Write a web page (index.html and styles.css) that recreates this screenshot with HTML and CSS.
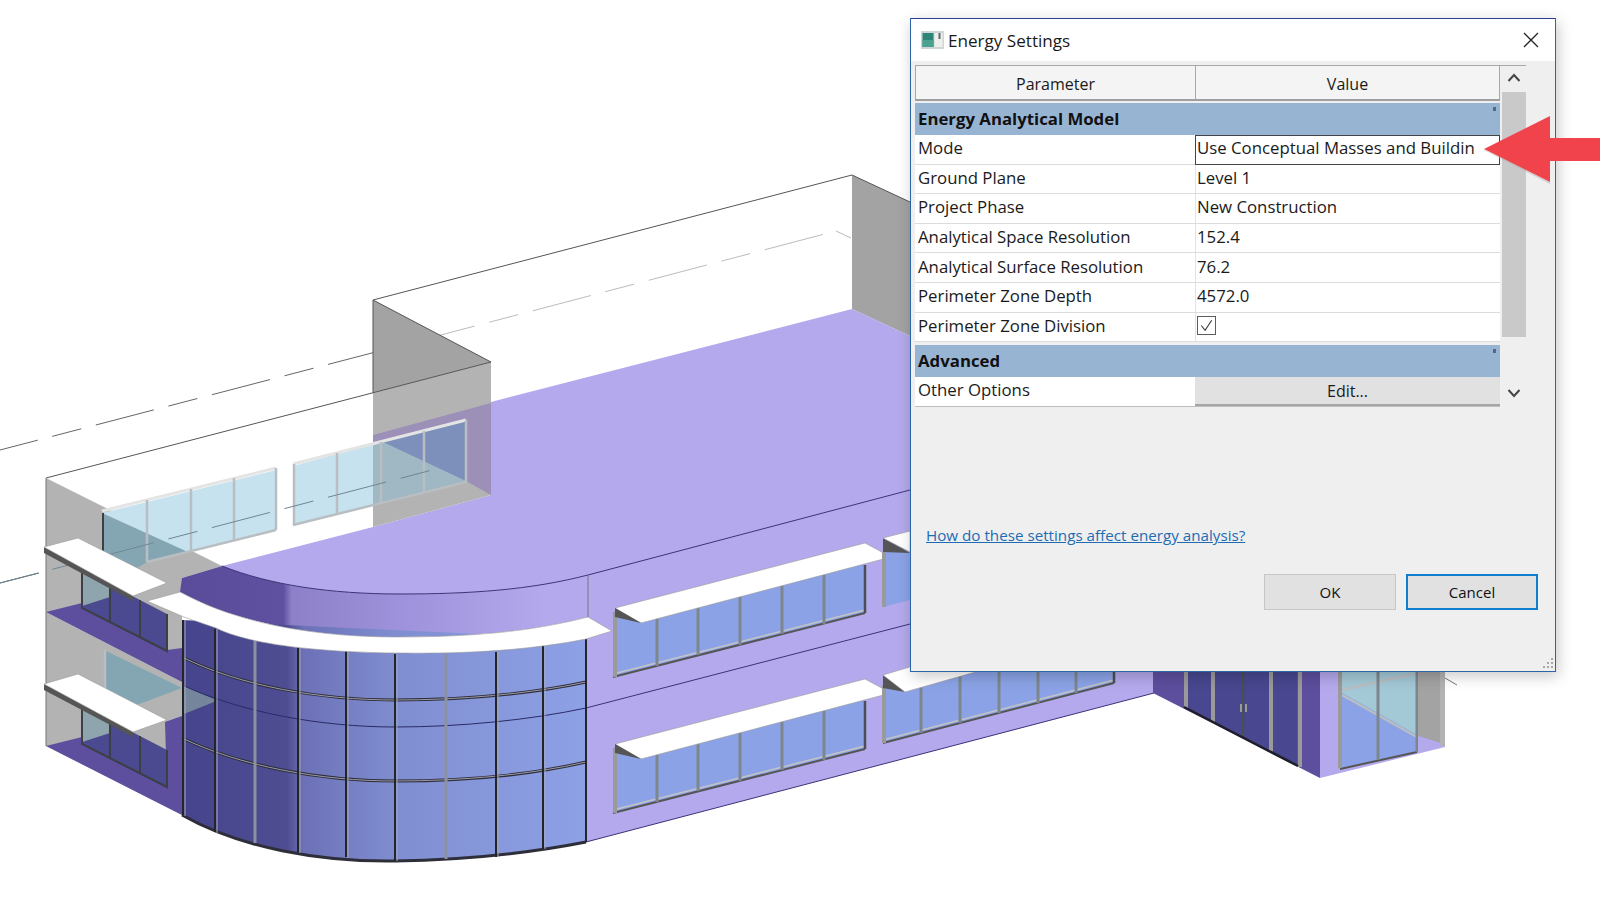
FILE: index.html
```html
<!DOCTYPE html>
<html lang="en">
<head>
  <meta charset="UTF-8">
  <title>Energy Settings</title>
  <link rel="stylesheet" href="styles.css">
</head>
<body>

<div class="stage">

  <!-- building model -->
  <svg class="model" viewBox="0 0 1600 910" width="1600" height="910">
    <defs>
      <linearGradient id="fascia" gradientUnits="userSpaceOnUse" x1="182" y1="0" x2="588" y2="0">
        <stop offset="0" stop-color="#5a4c9a"/>
        <stop offset="0.25" stop-color="#5f51a0"/>
        <stop offset="0.27" stop-color="#8d80c8"/>
        <stop offset="0.55" stop-color="#9e93dc"/>
        <stop offset="0.9" stop-color="#b4a9ec"/>
      </linearGradient>
      <linearGradient id="curtain" gradientUnits="userSpaceOnUse" x1="182" y1="0" x2="586" y2="0">
        <stop offset="0" stop-color="#45448c"/>
        <stop offset="0.26" stop-color="#4f4d92"/>
        <stop offset="0.3" stop-color="#6d71b7"/>
        <stop offset="0.53" stop-color="#7f8ed0"/>
        <stop offset="1" stop-color="#8ea1e6"/>
      </linearGradient>

      <g id="strip">
        <polygon class="glass" points="613,612 865,545 865,613 613,677"/>
        <polyline class="sill" points="613,677 865,613"/>
        <polyline class="sill-lite" points="613,674 865,610"/>
        <line class="post" x1="615" y1="612" x2="615" y2="677"/>
        <line class="mullion" x1="657" y1="610" x2="657" y2="666"/>
        <line class="mullion" x1="698" y1="600" x2="698" y2="655"/>
        <line class="mullion" x1="740" y1="590" x2="740" y2="645"/>
        <line class="mullion" x1="782" y1="580" x2="782" y2="634"/>
        <line class="mullion" x1="824" y1="570" x2="824" y2="624"/>
        <line class="post-dark" x1="865" y1="565" x2="865" y2="613"/>
        <polygon class="slab" points="615,608 865,543 891,557 641,623"/>
        <polygon class="under" points="615,608 641,623 615,617"/>
      </g>
    </defs>

    <!-- back walls and roof lines -->
    <polygon class="wall-dark" points="852,175 910,202 910,336 852,309"/>
    <polyline class="edge" points="373,300 852,175 910,202"/>
    <line class="dash" x1="0" y1="450" x2="437" y2="336"/>
    <line class="dash-lite" x1="437" y1="336" x2="836" y2="231"/>
    <line class="dash-lite" x1="836" y1="231" x2="851" y2="238"/>

    <!-- roof slab floor -->
    <path class="floor" d="M852,309 L910,336 L910,490 L588,575 C530,590 470,594 400,594 C330,594 270,585 222,566 L373,527 L491,495 L491,402 Z"/>

    <!-- mid wall -->
    <polygon class="wall-dark" points="373,300 491,362 373,393"/>
    <polygon class="wall" points="373,393 491,362 491,495 373,527"/>
    <polygon class="wall-purple" points="373,435 491,403 491,495 466,481 381,503 373,480"/>
    <polyline class="edge" points="373,393 373,300 491,362"/>
    <line class="edge" x1="46" y1="478" x2="491" y2="362"/>

    <!-- left wing walls -->
    <polygon class="wall" points="46,478 222,566 182,578 182,682 46,612"/>
    <polygon class="wall" points="46,612 182,682 182,815 46,746"/>
    <polygon class="band" points="46,612 82,603 167,650 182,648 182,682"/>
    <polygon class="band" points="46,746 82,737 167,787 182,786 182,815"/>
    <polygon class="band" points="165,722 182,716 182,790 167,790"/>
    <line class="edge-thin" x1="46" y1="478" x2="46" y2="746"/>
    <line class="edge" x1="0" y1="583" x2="39" y2="573"/>

    <!-- upper windows -->
    <polygon class="pane" points="102,513 276,470 276,530 147,562"/>
    <polygon class="pane-teal" points="102,513 188,552 147,562 102,590"/>
    <polygon class="pane" points="293,466 373,444 373,504 293,525"/>
    <polygon class="pane-grey" points="373,444 466,421 466,481 373,504"/>
    <polygon class="pane-blue" points="383,442 466,421 466,481"/>
    <polyline class="frame-top" points="102,511 276,468"/>
    <polyline class="frame-top" points="293,464 466,420"/>
    <polyline class="frame" points="147,562 276,530"/>
    <polyline class="frame" points="293,525 466,482"/>
    <line class="frame" x1="147" y1="500" x2="147" y2="562"/>
    <line class="frame" x1="191" y1="489" x2="191" y2="551"/>
    <line class="frame" x1="234" y1="478" x2="234" y2="540"/>
    <line class="frame" x1="276" y1="468" x2="276" y2="530"/>
    <line class="frame" x1="294" y1="464" x2="294" y2="525"/>
    <line class="frame" x1="337" y1="453" x2="337" y2="514"/>
    <line class="frame" x1="381" y1="442" x2="381" y2="503"/>
    <line class="frame" x1="424" y1="431" x2="424" y2="492"/>
    <line class="frame" x1="466" y1="420" x2="466" y2="482"/>
    <line class="frame-dark" x1="103" y1="513" x2="103" y2="560"/>
    <line class="dash-glass" x1="0" y1="583" x2="436" y2="469"/>

    <!-- main wall -->
    <polygon class="floor" points="586,575 910,490 1154,400 1154,693 586,842"/>
    <line class="floor-edge" x1="586" y1="708" x2="910" y2="624"/>
    <line class="floor-edge" x1="586" y1="842" x2="1154" y2="693"/>

    <!-- fascia and curved slab -->
    <path class="fascia" d="M182,578 L222,566 C270,585 330,594 400,594 C470,594 530,590 588,575 L588,617 C530,632 470,637 396,637 C320,637 240,625 180,592 Z"/>
    <path class="floor-edge" d="M222,566 C270,585 330,594 400,594 C470,594 530,590 588,575 L910,490"/>
    <line class="edge-thin" x1="588" y1="575" x2="588" y2="617"/>

    <!-- curtain wall -->
    <path class="curtain" d="M182,620 L586,639 L586,842 C530,853 460,860 395,861 C320,862 240,848 182,815 Z"/>
    <path class="curtain" d="M182,620 C240,640 320,654 395,654 C470,654 530,650 586,639 L586,700 L182,700 Z"/>
    <polygon class="pane-through" points="184,686 214,699 214,702 184,714"/>
    <path class="transom" d="M182,657 C240,686 320,700 395,700 C460,700 530,694 586,682"/>
    <path class="transom-core" d="M182,657 C240,686 320,700 395,700 C460,700 530,694 586,682"/>
    <path class="transom-thin" d="M182,685 C240,712 320,727 395,727 C460,727 530,720 586,708"/>
    <path class="transom" d="M182,738 C240,766 320,781 395,781 C460,781 530,775 586,762"/>
    <path class="transom-core" d="M182,738 C240,766 320,781 395,781 C460,781 530,775 586,762"/>
    <path class="transom" d="M182,815 C240,848 320,862 395,861 C460,860 530,853 586,842"/>
    <line class="curtain-post" x1="183" y1="620" x2="183" y2="815"/>
    <line class="curtain-edge" x1="185" y1="620" x2="185" y2="816"/>
    <line class="curtain-post" x1="215" y1="629" x2="215" y2="832"/>
    <line class="curtain-edge" x1="217" y1="629" x2="217" y2="833"/>
    <line class="curtain-lite" x1="255" y1="639" x2="255" y2="843"/>
    <line class="curtain-post" x1="298" y1="647" x2="298" y2="852"/>
    <line class="curtain-edge" x1="300" y1="647" x2="300" y2="853"/>
    <line class="curtain-post" x1="346" y1="651" x2="346" y2="857"/>
    <line class="curtain-edge" x1="348" y1="651" x2="348" y2="858"/>
    <line class="curtain-post" x1="395" y1="654" x2="395" y2="861"/>
    <line class="curtain-edge" x1="397" y1="654" x2="397" y2="861"/>
    <line class="curtain-lite" x1="446" y1="654" x2="446" y2="859"/>
    <line class="curtain-post" x1="496" y1="652" x2="496" y2="857"/>
    <line class="curtain-edge" x1="498" y1="652" x2="498" y2="857"/>
    <line class="curtain-post" x1="543" y1="645" x2="543" y2="849"/>
    <line class="curtain-edge" x1="545" y1="645" x2="545" y2="849"/>
    <line class="curtain-post" x1="586" y1="639" x2="586" y2="842"/>
    <path class="slab" d="M147,601 L180,592 C240,625 320,637 396,637 C470,637 530,632 588,617 L612,631 L586,639 C530,650 470,654 396,653 C320,652 250,645 216,628 L184,617 Z"/>

    <!-- wing windows and awnings -->
    <polygon class="pane-low" points="82,570 167,614 167,651 82,608"/>
    <polygon class="pane-shade" points="82,570 110,584 110,597 82,606"/>
    <polygon class="pane-low" points="82,706 167,750 167,787 82,744"/>
    <polygon class="pane-shade" points="82,706 110,720 110,733 82,742"/>
    <polygon class="pane-teal" points="104,650 182,688 145,702 104,715"/>
    <line class="frame" x1="105" y1="650" x2="105" y2="715"/>
    <polyline class="frame-dark" points="82,570 82,608 167,651 167,614"/>
    <polyline class="frame-dark" points="82,706 82,744 167,787 167,750"/>
    <line class="frame-dark" x1="110" y1="584" x2="110" y2="622"/>
    <line class="frame-dark" x1="140" y1="600" x2="140" y2="637"/>
    <line class="frame-dark" x1="110" y1="720" x2="110" y2="758"/>
    <line class="frame-dark" x1="140" y1="736" x2="140" y2="773"/>
    <polygon class="under" points="44,547 133,596 133,601 44,553"/>
    <polygon class="slab" points="44,547 78,538 167,583 133,596"/>
    <polygon class="under" points="44,684 133,732 133,737 44,690"/>
    <polygon class="slab" points="44,684 78,674 167,720 133,732"/>

    <!-- window strips on main wall -->
    <use href="#strip"/>
    <use href="#strip" y="136"/>
    <polygon class="glass" points="883,552 910,545 910,600 883,607"/>
    <polygon class="under" points="883,538 910,553 883,552"/>
    <polygon class="slab" points="883,538 910,531 910,552"/>
    <line class="post" x1="884" y1="552" x2="884" y2="607"/>
    <polygon class="glass" points="883,680 1114,620 1114,683 883,743"/>
    <polyline class="sill" points="883,743 1114,683"/>
    <polyline class="sill-lite" points="883,740 1114,680"/>
    <line class="post" x1="884" y1="685" x2="884" y2="743"/>
    <line class="mullion" x1="921" y1="670" x2="921" y2="733"/>
    <line class="mullion" x1="960" y1="660" x2="960" y2="723"/>
    <line class="mullion" x1="999" y1="650" x2="999" y2="713"/>
    <line class="mullion" x1="1038" y1="640" x2="1038" y2="703"/>
    <line class="mullion" x1="1076" y1="630" x2="1076" y2="693"/>
    <line class="post-dark" x1="1114" y1="620" x2="1114" y2="683"/>
    <polygon class="under" points="883,675 905,692 883,688"/>
    <polygon class="slab" points="883,675 1000,640 1000,665 905,692"/>

    <!-- right wing -->
    <polygon class="band" points="1153,660 1320,660 1320,778 1153,693"/>
    <polygon class="pane-door" points="1186,660 1297,660 1297,765 1186,708"/>
    <line class="post" x1="1186" y1="660" x2="1186" y2="708"/>
    <line class="post" x1="1213" y1="660" x2="1213" y2="722"/>
    <line class="post-dark" x1="1243" y1="660" x2="1243" y2="737"/>
    <line class="post" x1="1271" y1="660" x2="1271" y2="752"/>
    <line class="post" x1="1300" y1="660" x2="1300" y2="767"/>
    <polyline class="door-sill" points="1184,707 1298,766"/>
    <rect class="handle" x="1240" y="704" width="2" height="8"/>
    <rect class="handle" x="1245" y="704" width="2" height="8"/>
    <polygon class="floor" points="1320,660 1445,660 1445,747 1320,778"/>
    <polygon class="glass" points="1340,660 1417,660 1417,752 1340,768"/>
    <polygon class="pane-side" points="1342,693 1342,660 1417,660 1417,735"/>
    <polyline class="frame" points="1342,690 1417,673"/>
    <polyline class="frame" points="1342,695 1417,737"/>
    <polyline class="sill" points="1340,769 1417,752"/>
    <line class="post" x1="1340" y1="660" x2="1340" y2="768"/>
    <line class="mullion" x1="1378" y1="660" x2="1378" y2="760"/>
    <line class="mullion" x1="1417" y1="660" x2="1417" y2="752"/>
    <polygon class="wall-dark" points="1418,660 1440,660 1440,743 1418,736"/>
    <polygon class="wall" points="1440,660 1445,660 1445,747 1440,745"/>
    <polygon class="floor" points="1418,736 1440,743 1418,752"/>
    <line class="edge-thin" x1="1445" y1="678" x2="1457" y2="685"/>
  </svg>

  <!-- dialog -->
  <div class="dialog">
    <div class="title-bar">
      <svg class="app-icon" viewBox="0 0 23 18" width="23" height="18">
        <rect width="23" height="18" fill="#cfd6d6"/>
        <rect x="1.5" y="2" width="11" height="14" fill="#2c8576"/>
        <rect x="1.5" y="9" width="11" height="7" fill="#4ba38f"/>
        <rect x="13.5" y="2" width="8" height="14" fill="#eef0ee"/>
        <rect x="17.5" y="2" width="2" height="6" fill="#5c6a6a"/>
      </svg>
      <span class="title">Energy Settings</span>
      <svg class="close" viewBox="0 0 16 16" width="16" height="16">
        <path d="M1 1 L15 15 M15 1 L1 15" fill="none" stroke="#222" stroke-width="1.3"/>
      </svg>
    </div>

    <div class="dialog-body">
      <div class="grid-wrap">
        <div class="grid">
          <div class="head">
            <div class="head-cell col-name">Parameter</div>
            <div class="head-cell col-value">Value</div>
          </div>

          <div class="section">Energy Analytical Model<i class="dot"></i></div>
          <div class="row">
            <div class="cell col-name">Mode</div>
            <div class="cell col-value current">Use Conceptual Masses and Buildin</div>
          </div>
          <div class="row">
            <div class="cell col-name">Ground Plane</div>
            <div class="cell col-value">Level 1</div>
          </div>
          <div class="row">
            <div class="cell col-name">Project Phase</div>
            <div class="cell col-value">New Construction</div>
          </div>
          <div class="row">
            <div class="cell col-name">Analytical Space Resolution</div>
            <div class="cell col-value">152.4</div>
          </div>
          <div class="row">
            <div class="cell col-name">Analytical Surface Resolution</div>
            <div class="cell col-value">76.2</div>
          </div>
          <div class="row">
            <div class="cell col-name">Perimeter Zone Depth</div>
            <div class="cell col-value">4572.0</div>
          </div>
          <div class="row">
            <div class="cell col-name">Perimeter Zone Division</div>
            <div class="cell col-value">
              <svg class="check" viewBox="0 0 20 20" width="19" height="19">
                <rect x="0.5" y="0.5" width="19" height="19" fill="#fff" stroke="#555"/>
                <path d="M4.5 10 L8.5 15 L15.5 4.5" fill="none" stroke="#333" stroke-width="1.1"/>
              </svg>
            </div>
          </div>

          <div class="section section-gap">Advanced<i class="dot"></i></div>
          <div class="row row-last">
            <div class="cell col-name">Other Options</div>
            <div class="edit col-value">Edit...</div>
          </div>
        </div>

        <div class="scrollbar">
          <svg class="arrow-btn" viewBox="0 0 24 26" width="24" height="26">
            <path d="M6.5 15 L12 9 L17.5 15" fill="none" stroke="#444" stroke-width="2"/>
          </svg>
          <div class="thumb"></div>
          <svg class="arrow-btn arrow-down" viewBox="0 0 24 26" width="24" height="26">
            <path d="M6.5 10 L12 16 L17.5 10" fill="none" stroke="#444" stroke-width="2"/>
          </svg>
        </div>
      </div>

      <a class="help" href="#">How do these settings affect energy analysis?</a>

      <div class="buttons">
        <button class="btn">OK</button>
        <button class="btn btn-default">Cancel</button>
      </div>
    </div>

    <svg class="grip" viewBox="0 0 12 12" width="12" height="12">
      <path d="M9 1h2v2H9z M5 5h2v2H5z M9 5h2v2H9z M1 9h2v2H1z M5 9h2v2H5z M9 9h2v2H9z" fill="#a9a9a9"/>
    </svg>
  </div>

  <!-- red callout arrow -->
  <svg class="callout" viewBox="0 0 116 70" width="116" height="70">
    <polygon points="0,34 66,1 66,23 116,23 116,46 66,46 66,67" fill="#f1434b"/>
    <polygon points="66,67 66,69 0,35 0,34" fill="#b9aab0" opacity="0.5"/>
  </svg>

</div>

</body>
</html>
```

FILE: styles.css
```css
html, body {
  margin: 0;
  padding: 0;
  background: #fff;
}

body {
  font-family: "Open Sans", "Noto Sans", sans-serif;
  color: #1a1a1a;
  overflow: hidden;
}

.stage {
  position: relative;
  width: 1600px;
  height: 910px;
  overflow: hidden;
}

/* model */
.model {
  display: block;
}

.wall { fill: #b3b3b3; }
.wall-dark { fill: #a3a3a3; }
.wall-purple { fill: #9c90b8; }
.floor { fill: #b4a9ec; }
.band { fill: #5d4e9e; }
.fascia { fill: url(#fascia); }
.curtain { fill: url(#curtain); }
.glass { fill: #8ba3e6; }
.slab { fill: #fff; stroke: #9a9a9a; stroke-width: 0.6; }
.under { fill: #555; }
.pane { fill: #c6e2ef; }
.pane-grey { fill: #9fb8c4; }
.pane-blue { fill: #7d90bc; }
.pane-teal { fill: #84a6b3; }
.pane-low { fill: #4b4a90; }
.pane-shade { fill: #8fa5ae; }
.pane-door { fill: #48478f; }
.pane-side { fill: #a3c8d6; }
.pane-through { fill: #75859c; }

.edge, .edge-thin, .dash, .dash-lite, .dash-glass, .floor-edge,
.sill, .sill-lite, .post, .post-dark, .mullion, .frame, .frame-top, .frame-dark,
.transom, .transom-core, .transom-thin, .curtain-post, .curtain-edge, .curtain-lite, .door-sill {
  fill: none;
}

.edge { stroke: #555; stroke-width: 1; }
.edge-thin { stroke: #777; stroke-width: 1; }
.dash { stroke: #666; stroke-width: 1; stroke-dasharray: 60 15 30 15; stroke-dashoffset: 21; }
.dash-lite { stroke: #bcbcbc; stroke-width: 1; stroke-dasharray: 60 15 30 15; stroke-dashoffset: 21; }
.dash-glass { stroke: #6f8794; stroke-width: 1; stroke-dasharray: 60 15 30 15; stroke-dashoffset: 21; }
.floor-edge { stroke: #3a3378; stroke-width: 1; }
.sill { stroke: #555; stroke-width: 2; }
.sill-lite { stroke: #c4c4c4; stroke-width: 1.5; }
.post { stroke: #9a9a9a; stroke-width: 4; }
.post-dark { stroke: #4a4f55; stroke-width: 2.5; }
.mullion { stroke: #7d868e; stroke-width: 3; }
.frame { stroke: #b9bec2; stroke-width: 2.5; }
.frame-top { stroke: #e4e4e4; stroke-width: 3; }
.frame-dark { stroke: #3c3f46; stroke-width: 2; }
.transom { stroke: #2e2e3a; stroke-width: 3; }
.transom-core { stroke: #9a9aa8; stroke-width: 1; }
.transom-thin { stroke: #2b2a66; stroke-width: 1; }
.curtain-post { stroke: #24242c; stroke-width: 2; }
.curtain-edge { stroke: #a5a9b8; stroke-width: 1; }
.curtain-lite { stroke: #8c90a0; stroke-width: 3; }
.door-sill { stroke: #1f1f2a; stroke-width: 2.5; }
.handle { fill: #9a9a9a; }

/* dialog */
.dialog {
  position: absolute;
  left: 910px;
  top: 18px;
  width: 646px;
  height: 654px;
  box-sizing: border-box;
  background: #efefef;
  border: 1px solid #2f63a8;
  border-top-color: #27408f;
  box-shadow: 2px 4px 14px rgba(0,0,0,0.22);
  display: flex;
  flex-direction: column;
}

.title-bar {
  height: 42px;
  flex: none;
  background: #fff;
  display: flex;
  align-items: center;
  padding: 0 16px 0 10px;
}

.app-icon {
  margin-right: 4px;
}

.title {
  font-size: 17.1px;
  flex: 1;
  padding-top: 1px;
}

.dialog-body {
  flex: 1;
  display: flex;
  flex-direction: column;
  padding: 4px 0 0 4px;
}

.grid-wrap {
  display: flex;
  gap: 2px;
  border-top: 1px solid #a8a8a8;
  width: 611px;
}

.grid {
  width: 585px;
  flex: none;
}

.head {
  display: flex;
  height: 33px;
  background: #f4f4f4;
  border-bottom: 2px solid #9e9e9e;
  margin-bottom: 2px;
}

.head-cell {
  display: flex;
  align-items: center;
  justify-content: center;
  font-size: 16px;
  padding-top: 2px;
  border-left: 1px solid #a8a8a8;
}

.col-name {
  width: 280px;
  flex: none;
  box-sizing: border-box;
}

.col-value {
  flex: 1;
  min-width: 0;
  box-sizing: border-box;
}

.head .col-value {
  border-right: 1px solid #a8a8a8;
}

.section {
  position: relative;
  height: 32px;
  line-height: 32px;
  background: #98b4d3;
  font-size: 16.8px;
  font-weight: 700;
  padding-left: 3px;
  color: #111;
}

.section-gap {
  margin-top: 3px;
}

.dot {
  position: absolute;
  right: 4px;
  top: 4px;
  width: 3px;
  height: 4px;
  background: #4f6a88;
}

.row {
  display: flex;
  height: 29.6px;
  background: #fff;
  border-bottom: 1px solid #dcdcdc;
  box-sizing: border-box;
}

.row-last {
  height: 30px;
  border-bottom: 1px solid #bdbdbd;
}

.cell {
  display: flex;
  align-items: center;
  font-size: 16.8px;
  padding: 0 0 3px 3px;
  white-space: nowrap;
  overflow: hidden;
}

.row-last .cell {
  padding-bottom: 4px;
}

.cell.col-value {
  padding-left: 1px;
  border-left: 1px solid #e2e2e2;
}

.cell.current {
  border: 1px solid #444;
  height: 30px;
  padding-bottom: 5px;
}

.check {
  margin-top: 0;
  margin-left: 0;
}

.edit {
  display: flex;
  align-items: center;
  justify-content: center;
  background: #e1e1e1;
  border-bottom: 2px solid #a5a5a5;
  font-size: 16px;
  padding-top: 1px;
}

.scrollbar {
  position: relative;
  width: 24px;
  flex: none;
}

.arrow-btn {
  display: block;
}

.arrow-down {
  position: absolute;
  left: 0;
  top: 314px;
}

.thumb {
  height: 245px;
  background: #c9c9c9;
}

.help {
  margin: 117px 0 0 11px;
  font-size: 15.2px;
  line-height: 22px;
  color: #1d6cb3;
  align-self: flex-start;
}

.buttons {
  display: flex;
  justify-content: flex-end;
  gap: 10px;
  margin-top: 28px;
  padding-right: 17px;
}

.btn {
  width: 132px;
  height: 36px;
  background: #e1e1e1;
  border: 1px solid #c6c6c6;
  font-family: inherit;
  font-size: 15px;
  color: #111;
  padding: 0;
}

.btn-default {
  border: 2px solid #0f7ecf;
}

.grip {
  position: absolute;
  right: 1px;
  bottom: 2px;
}

.callout {
  position: absolute;
  left: 1484px;
  top: 115px;
}
```
